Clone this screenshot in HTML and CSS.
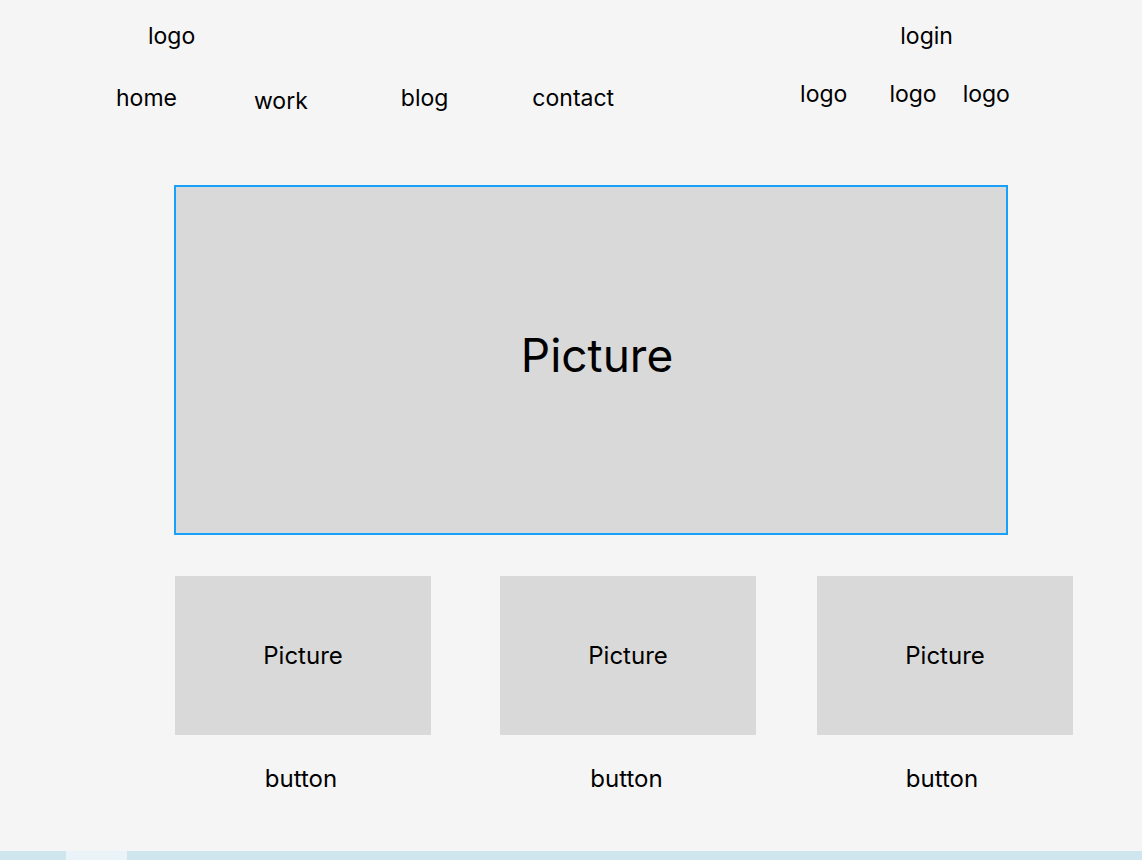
FILE: index.html
```html
<!DOCTYPE html>
<html lang="en">
<head>
<meta charset="utf-8">
<title>Wireframe</title>
<link rel="stylesheet" href="styles.css">
</head>
<body>
<div class="page">
  <header class="header">
    <div class="top-row">
      <span class="brand">logo</span>
      <span class="login">login</span>
    </div>
    <nav class="nav-row">
      <a class="nav home">home</a>
      <a class="nav work">work</a>
      <a class="nav blog">blog</a>
      <a class="nav contact">contact</a>
      <div class="socials">
        <span class="social s1">logo</span>
        <span class="social s2">logo</span>
        <span class="social s3">logo</span>
      </div>
    </nav>
  </header>
  <main class="main">
    <div class="hero"><span class="hero-text">Picture</span></div>
    <div class="cards">
      <div class="card c1">
        <div class="thumb"><span>Picture</span></div>
        <div class="button b1">button</div>
      </div>
      <div class="card c2">
        <div class="thumb"><span>Picture</span></div>
        <div class="button b2">button</div>
      </div>
      <div class="card c3">
        <div class="thumb"><span>Picture</span></div>
        <div class="button b3">button</div>
      </div>
    </div>
  </main>
  <div class="strip"><div class="strip-a"></div><div class="strip-b"></div><div class="strip-c"></div></div>
</div>
</body>
</html>
```

FILE: styles.css
```css
* { box-sizing: border-box; }
html, body { margin: 0; padding: 0; }
body {
  background: #f5f5f5;
  font-family: Inter, "Liberation Sans", sans-serif;
  color: #000;
  width: 1142px;
  height: 860px;
  overflow: hidden;
}
.page {
  display: flex;
  flex-direction: column;
  height: 860px;
}
.header { display: flex; flex-direction: column; }
.top-row {
  display: flex;
  font-size: 23px;
  line-height: 28px;
  padding-top: 22px;
}
.brand { margin-left: 148px; }
.login { margin-left: 705px; }
.nav-row {
  display: flex;
  align-items: flex-start;
  font-size: 23px;
  line-height: 28px;
  margin-top: 34px;
  height: 30px;
}
.nav { color: #000; text-decoration: none; }
.home { margin-left: 116px; }
.work { margin-left: 77px; margin-top: 3px; }
.blog { margin-left: 93px; }
.contact { margin-left: 84px; }
.socials { display: flex; margin-left: 186px; margin-top: -4px; }
.s2 { margin-left: 42px; }
.s3 { margin-left: 26px; }

.main { display: flex; flex-direction: column; }
.hero {
  margin-top: 71px;
  margin-left: 174px;
  width: 834px;
  height: 350px;
  background: #d9d9d9;
  border: 2px solid #18a0fb;
  display: flex;
  align-items: center;
  justify-content: center;
}
.hero-text {
  font-size: 46px;
  line-height: 56px;
  padding-left: 12px;
  margin-top: -10px;
}
.cards {
  display: flex;
  margin-top: 41px;
  margin-left: 175px;
}
.card { display: flex; flex-direction: column; width: 256px; }
.c2 { margin-left: 69px; }
.c3 { margin-left: 61px; }
.thumb {
  height: 159px;
  background: #d9d9d9;
  display: flex;
  align-items: center;
  justify-content: center;
  font-size: 24px;
  line-height: 26px;
}
.button {
  text-align: center;
  font-size: 24px;
  line-height: 26px;
  margin-top: 31px;
}
.b1 { padding-right: 4px; }
.b2 { padding-right: 3px; }
.b3 { padding-right: 6px; }
.strip {
  margin-top: auto;
  height: 9px;
  display: flex;
}
.strip-a { width: 66px; background: #d0e6ee; }
.strip-b { width: 61px; background: #eaf4f8; }
.strip-c { flex: 1; background: #d0e6ee; }
```
